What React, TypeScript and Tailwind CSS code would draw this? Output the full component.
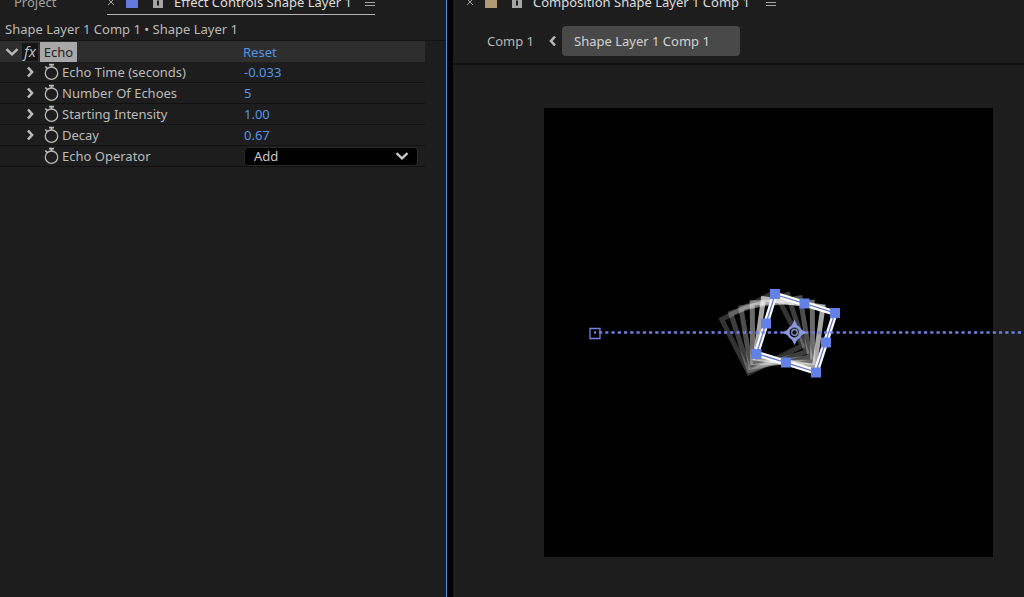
import type { ReactNode } from "react";

const ECHOES = [
  { x: 218, angle: -27, opacity: 0.2 },
  { x: 224.5, angle: -18, opacity: 0.24 },
  { x: 231.5, angle: -9.5, opacity: 0.3 },
  { x: 238.5, angle: -0.5, opacity: 0.42 },
  { x: 245, angle: 8, opacity: 0.65 },
];

const HANDLES = [
  [231, 186],
  [260.5, 195.5],
  [291, 205],
  [282, 234.5],
  [272, 264.5],
  [242, 254.5],
  [212.5, 246],
  [222, 215.5],
];

const PROPERTIES = [
  { id: "echo-time", label: "Echo Time (seconds)", value: "-0.033" },
  { id: "echo-count", label: "Number Of Echoes", value: "5" },
  { id: "intensity", label: "Starting Intensity", value: "1.00" },
  { id: "decay", label: "Decay", value: "0.67" },
];

function Chevron({ className }: { className: string }) {
  return (
    <svg viewBox="0 0 12 12" className={className} fill="none" stroke="currentColor" strokeWidth="2.6" aria-hidden="true">
      <path d="M4 1.5 8 6 4 10.5" />
    </svg>
  );
}

function DownChevron() {
  return (
    <svg viewBox="0 0 14 10" className="h-[10px] w-[14px]" fill="none" stroke="currentColor" strokeWidth="2.4" aria-hidden="true">
      <path d="M1.5 2.2 7 7.4l5.500-5.200" />
    </svg>
  );
}

function Stopwatch() {
  return (
    <svg viewBox="0 0 16 18" className="h-[18px] w-4" fill="none" stroke="currentColor" strokeWidth="1.300" aria-hidden="true">
      <circle cx="7.500" cy="10.200" r="6.200" />
      <path d="M5 1.700h5M7.500 1.700v2.300M1.300 3.500l2.200 2.200" strokeWidth="1.700" />
    </svg>
  );
}

function Lock() {
  return (
    <svg viewBox="0 0 12 14" className="h-[14px] w-3" fill="#a6a6a6" aria-hidden="true">
      <path d="M1 5h10v8H1z" />
      <path d="M5 5.500h2v5H5z" fill="#1d1d1d" />
      <path d="M3.500 5V2.500h5V5" fill="none" stroke="#a6a6a6" />
    </svg>
  );
}

function MenuButton() {
  return (
    <button type="button" aria-label="Panel menu" className="flex h-4 w-[10px] flex-col justify-center gap-[2px]">
      <span className="h-px w-full bg-[#a6a6a6]" />
      <span className="h-px w-full bg-[#a6a6a6]" />
      <span className="h-px w-full bg-[#a6a6a6]" />
    </button>
  );
}

function CloseButton() {
  return (
    <button type="button" aria-label="Close panel" className="h-4 w-2">
      <svg viewBox="0 0 8 16" className="h-4 w-2" stroke="#a6a6a6" aria-hidden="true">
        <path d="m1 5 6 6M7 5l-6 6" />
      </svg>
    </button>
  );
}

function PropertyRow({ label, expandable, children }: { label: ReactNode; expandable?: boolean; children: ReactNode }) {
  return (
    <div className="flex h-[21px] items-center border-b border-[#111]">
      <div className="flex w-[244px] shrink-0 items-center pl-6">
        {expandable ? (
          <button type="button" aria-label="Expand property" className="mr-2 h-3 w-3">
            <Chevron className="h-3 w-3" />
          </button>
        ) : (
          <span className="mr-2 w-3" />
        )}
        <button type="button" aria-label="Toggle animation" className="mr-[2px]">
          <Stopwatch />
        </button>
        {label}
      </div>
      {children}
    </div>
  );
}

function EffectControls() {
  return (
    <section className="w-[447px] shrink-0 border-r border-[#4f93e3]">
      <header className="-mt-[7px] flex h-[22px] items-start pl-[14px]">
        <button type="button" className="w-[93px] text-left leading-[18px] text-[#a0a0a0]">Project</button>
        <div className="flex h-[22px] w-[268px] items-start border-b border-[#b5b5b5]">
          <div className="flex h-[18px] grow items-center">
            <CloseButton />
            <span className="ml-[11px] h-3 w-3 bg-[#6379df]" />
            <span className="mr-[10px] ml-[14px]"><Lock /></span>
            <span className="text-[#dedede]">Effect Controls Shape Layer 1</span>
            <span className="ml-auto"><MenuButton /></span>
          </div>
        </div>
      </header>
      <p className="flex h-[26px] items-center border-b border-[#131313] pt-[2px] pl-[5px]">Shape Layer 1 Comp 1 • Shape Layer 1</p>
      <div className="mr-[21px]">
        <div className="flex h-[21px] items-center bg-[#2e2e2e]">
          <div className="flex w-[243px] items-center pl-[5px]">
            <button type="button" aria-label="Collapse Echo"><DownChevron /></button>
            <span className="ml-[3px] h-[18px] w-4 bg-[#151515] text-center text-[15px] leading-[17px] italic">fx</span>
            <span className="ml-[2px] h-[20px] w-[37px] bg-[#a8a8a8] text-center leading-[20px] text-[#222]">Echo</span>
          </div>
          <button type="button" className="text-[#5494e6]">Reset</button>
        </div>
        {PROPERTIES.map((p) => (
          <PropertyRow key={p.id} expandable label={<label htmlFor={p.id}>{p.label}</label>}>
            <input id={p.id} defaultValue={p.value} className="w-20 bg-transparent text-[#5494e6] outline-none" />
          </PropertyRow>
        ))}
        <PropertyRow label={<label htmlFor="operator">Echo Operator</label>}>
          <div className="relative h-[19px] w-[174px]">
            <select id="operator" className="h-full w-full appearance-none rounded border border-[#292929] bg-black pl-[9px] leading-[17px] text-[#c8c8c8]">
              <option>Add</option>
            </select>
            <span className="pointer-events-none absolute inset-y-0 right-[9px] flex items-center text-[#c8c8c8]"><DownChevron /></span>
          </div>
        </PropertyRow>
      </div>
    </section>
  );
}

function MotionOverlay() {
  return (
    <svg viewBox="0 0 449 449" className="absolute inset-0 h-full w-full overflow-visible" fill="none" aria-label="Square with echo trail">
      {ECHOES.map((e) => (
        <rect key={e.angle} x="-30" y="-30" width="60" height="60" stroke="#fff" strokeWidth="5" opacity={e.opacity} transform={`translate(${e.x} 224.5) rotate(${e.angle})`} />
      ))}
      <path d="m231 186.500 60 18.500-19 59-59.500-18.500z" stroke="#fff" strokeWidth="5.500" />
      <path d="m231 186.500 60 18.500-19 59-59.500-18.500z" stroke="#6076cf" strokeWidth="1.300" />
      <path d="M55 224.500h425" stroke="#6d7fe0" strokeWidth="2.400" strokeDasharray="3.200 3.050" />
      <path d="M46 220.500h10v10H46z" stroke="#7483e5" strokeWidth="1.300" />
      <path d="M50 224.500h2" stroke="#8893e8" strokeWidth="2" />
      <circle cx="250.500" cy="224.500" r="6.300" stroke="#8998df" strokeWidth="2.600" />
      <path d="m247.500 218 3-6.500 3 6.500zM247.500 231l3 6 3-6zM244 221.500l-6 3 6 3zM257 221.500l6 3-6 3z" fill="#8998df" />
      <circle cx="250.500" cy="224.500" r="2.800" stroke="#8998df" strokeWidth="1.200" fill="#111" />
      {HANDLES.map(([x, y]) => (
        <rect key={`${x}-${y}`} x={x - 5} y={y - 5} width="10" height="10" fill="#6280e5" />
      ))}
    </svg>
  );
}

function Composition() {
  return (
    <section className="min-w-0 grow border-l-[6px] border-black">
      <header className="-mt-[7px] flex h-[18px] items-center pl-[13px]">
        <CloseButton />
        <span className="ml-[11px] h-3 w-3 bg-[#b09a74]" />
        <span className="mr-[10px] ml-[14px]"><Lock /></span>
        <span className="text-[#dedede]">Composition Shape Layer 1 Comp 1</span>
        <span className="ml-4"><MenuButton /></span>
      </header>
      <nav className="flex h-[54px] items-center border-b-2 border-[#111] pt-[15px] pb-[7px] pl-[34px] text-[#b5b5b5]" aria-label="Composition path">
        <a href="#comp-1">Comp 1</a>
        <Chevron className="mr-[3px] ml-[13px] h-3 w-3 rotate-180" />
        <a href="#shape-layer" className="h-[30px] w-[178px] rounded bg-[#484848] pl-3 leading-[31px] text-[#d2d2d2]">Shape Layer 1 Comp 1</a>
      </nav>
      <div className="pt-[43px] pr-[31px] pl-[91px]">
        <div className="relative aspect-square bg-black">
          <MotionOverlay />
        </div>
      </div>
    </section>
  );
}

export default function App() {
  return (
    <main className="flex min-h-screen overflow-hidden bg-[#1d1d1d] font-['Noto_Sans',sans-serif] text-[13px] leading-[18px] text-[#bababa]">
      <EffectControls />
      <Composition />
    </main>
  );
}
